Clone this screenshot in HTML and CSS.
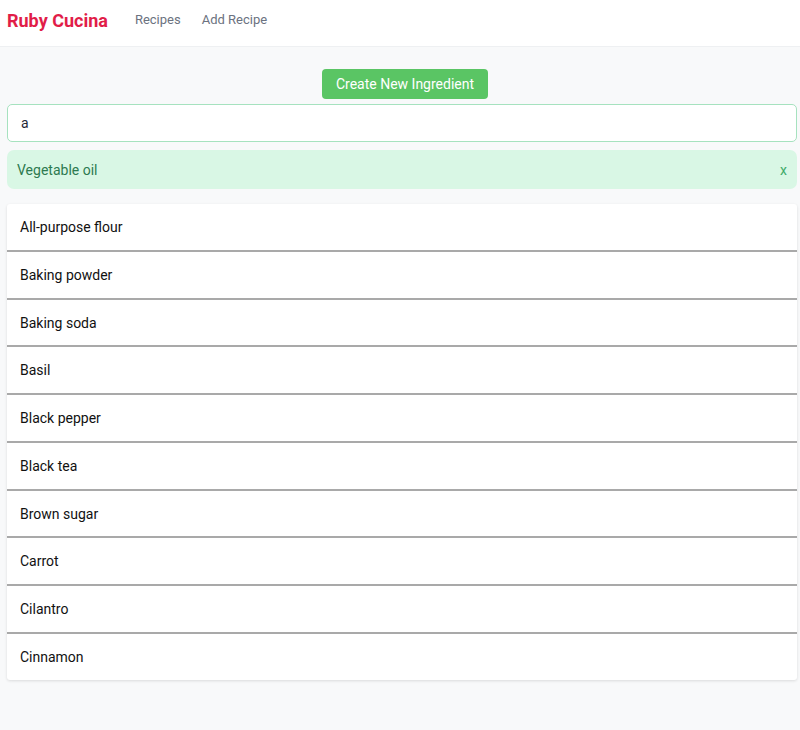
FILE: index.html
```html
<!DOCTYPE html>
<html>
<head>
<meta charset="utf-8">
<link rel="stylesheet" href="styles.css">
</head>
<body>
<nav class="nav">
  <a class="brand">Ruby Cucina</a>
  <a class="link">Recipes</a>
  <a class="link">Add Recipe</a>
</nav>
<main class="main">
  <div class="actions"><button class="btn">Create New Ingredient</button></div>
  <input class="search" type="text" value="a">
  <div class="alert"><span>Vegetable oil</span><span class="close">x</span></div>
  <ul class="list">
    <li>All-purpose flour</li>
    <li>Baking powder</li>
    <li>Baking soda</li>
    <li>Basil</li>
    <li>Black pepper</li>
    <li>Black tea</li>
    <li>Brown sugar</li>
    <li>Carrot</li>
    <li>Cilantro</li>
    <li>Cinnamon</li>
  </ul>
</main>
</body>
</html>
```
FILE: styles.css
```css
* { box-sizing: border-box; }
html, body { margin: 0; height: 100%; }
body {
  background: #f8f9fa;
  font-family: Roboto, "Noto Sans", sans-serif;
  color: #111;
}
.nav {
  height: 46px;
  background: #fff;
  display: flex;
  align-items: center;
  padding-left: 7px;
  box-shadow: 0 1px 0 #eef0f2;
}
.brand {
  color: #e11d48;
  font-weight: 700;
  font-size: 18px;
  margin-right: 27px;
  margin-top: -5px;
}
.link {
  color: #6b7280;
  font-size: 13px;
  font-weight: 400;
  margin-right: 21px;
  margin-top: -7px;
}
.main {
  padding: 23px 3px 0 7px;
}
.actions {
  display: flex;
  justify-content: center;
  margin-bottom: 5px;
}
.btn {
  background: #5ac564;
  color: #fff;
  border: none;
  border-radius: 4px;
  font-family: inherit;
  font-size: 14px;
  height: 30px;
  padding: 0 14px;
  margin-left: 6px;
}
.search {
  display: block;
  width: 100%;
  height: 38px;
  border: 1px solid #a6e2bf;
  border-radius: 5px;
  padding: 0 13px;
  font-family: inherit;
  font-size: 14px;
  color: #1f2937;
  background: #fff;
  outline: none;
}
.alert {
  margin-top: 8px;
  height: 39px;
  background: #d9f7e5;
  border-radius: 7px;
  display: flex;
  align-items: center;
  justify-content: space-between;
  padding: 0 10px;
  color: #2d7a50;
  font-size: 14px;
}
.close { color: #3faa6a; font-size: 14px; }
.list {
  list-style: none;
  margin: 15px 0 0;
  padding: 0;
  background: #fff;
  border-radius: 3px;
  box-shadow: 0 1px 3px rgba(0,0,0,0.12);
}
.list li {
  padding: 15px 13px 13px;
  line-height: 17.75px;
  font-size: 14px;
  color: #111;
  border-bottom: 2px solid #a9a9a9;
}
.list li:last-child { border-bottom: none; }
```
